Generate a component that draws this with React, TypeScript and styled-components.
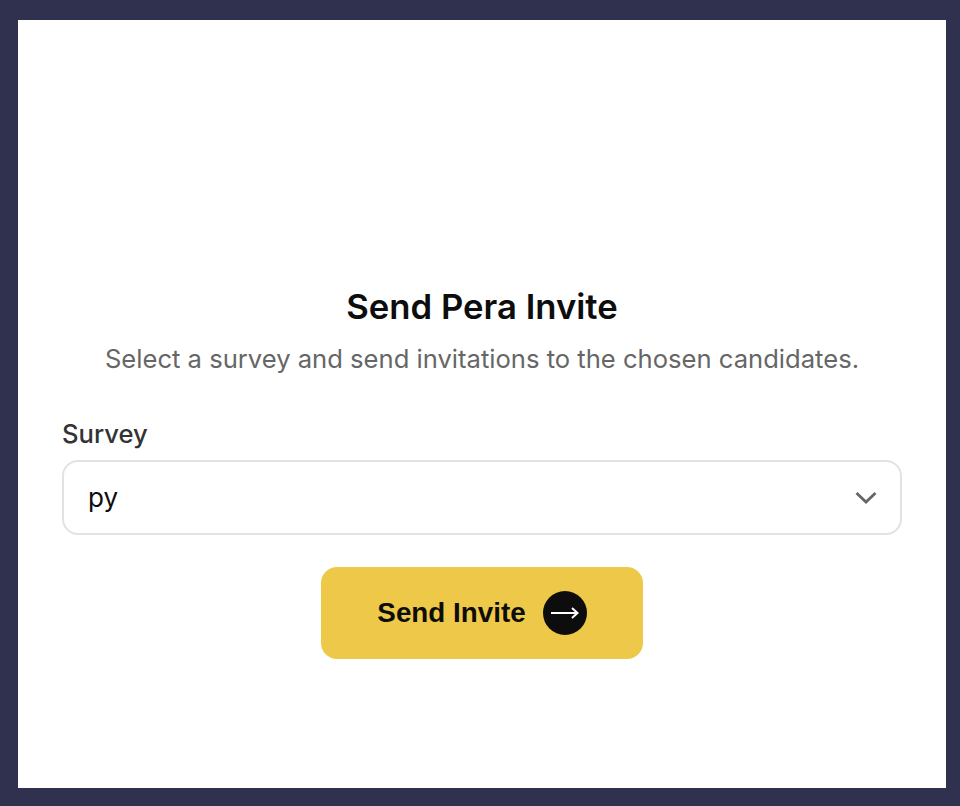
import React from "react";
import styled, { createGlobalStyle } from "styled-components";

const GlobalStyle = createGlobalStyle`
  html, body {
    margin: 0;
    padding: 0;
    height: 100%;
    background: #30304f;
  }
  * {
    box-sizing: border-box;
  }
`;

export default function App() {
  return (
    <>
      <GlobalStyle />
      <Frame>
        <Modal>
          <Title>Send Pera Invite</Title>
          <Subtitle>Select a survey and send invitations to the chosen candidates.</Subtitle>
          <Label>Survey</Label>
          <SelectBox>
            <SelectValue>py</SelectValue>
            <svg width="22" height="22" viewBox="0 0 22 22" fill="none">
              <path d="M1.5 6L11 15L20.5 6" stroke="#666666" strokeWidth="2.8" />
            </svg>
          </SelectBox>
          <Actions>
            <SendButton>
              Send Invite
              <ArrowCircle>
                <svg width="28" height="14" viewBox="0 0 28 14" fill="none">
                  <path d="M0 7H26M21 2L26.5 7L21 12" stroke="#ffffff" strokeWidth="2" />
                </svg>
              </ArrowCircle>
            </SendButton>
          </Actions>
        </Modal>
      </Frame>
    </>
  );
}

const Frame = styled.div`
  width: 960px;
  height: 806px;
  padding: 20px 14px 18px 18px;
`;

const Modal = styled.div`
  height: 100%;
  background: #ffffff;
  padding: 263px 44px 0;
  display: flex;
  flex-direction: column;
  font-family: Inter, "Liberation Sans", sans-serif;
`;

const Title = styled.h2`
  margin: 0;
  font-size: 34.7px;
  line-height: 46px;
  font-weight: 600;
  color: #0d0d0d;
  text-align: center;
`;

const Subtitle = styled.p`
  margin: 12px 0 0;
  font-size: 25.6px;
  line-height: 36px;
  font-weight: 400;
  color: #666666;
  text-align: center;
`;

const Label = styled.label`
  margin-top: 39px;
  font-size: 25.6px;
  line-height: 36px;
  font-weight: 500;
  color: #333333;
`;

const SelectBox = styled.div`
  margin-top: 8px;
  height: 75px;
  border: 2px solid #e2e2e2;
  border-radius: 16px;
  padding: 0 23px 0 24px;
  display: flex;
  align-items: center;
  justify-content: space-between;
`;

const SelectValue = styled.span`
  font-size: 26px;
  line-height: 38px;
  padding-top: 1px;
  color: #0d0d0d;
`;

const Actions = styled.div`
  margin-top: 32px;
  display: flex;
  justify-content: center;
`;

const SendButton = styled.button`
  width: 322px;
  height: 92px;
  border: none;
  border-radius: 16px;
  background: #eec848;
  display: flex;
  align-items: center;
  justify-content: center;
  gap: 17px;
  font-family: "Liberation Sans", Arial, sans-serif;
  font-size: 27.8px;
  font-weight: 700;
  color: #0d0d0d;
`;

const ArrowCircle = styled.span`
  width: 44px;
  height: 44px;
  border-radius: 50%;
  background: #0d0d0d;
  display: flex;
  align-items: center;
  justify-content: center;
`;
